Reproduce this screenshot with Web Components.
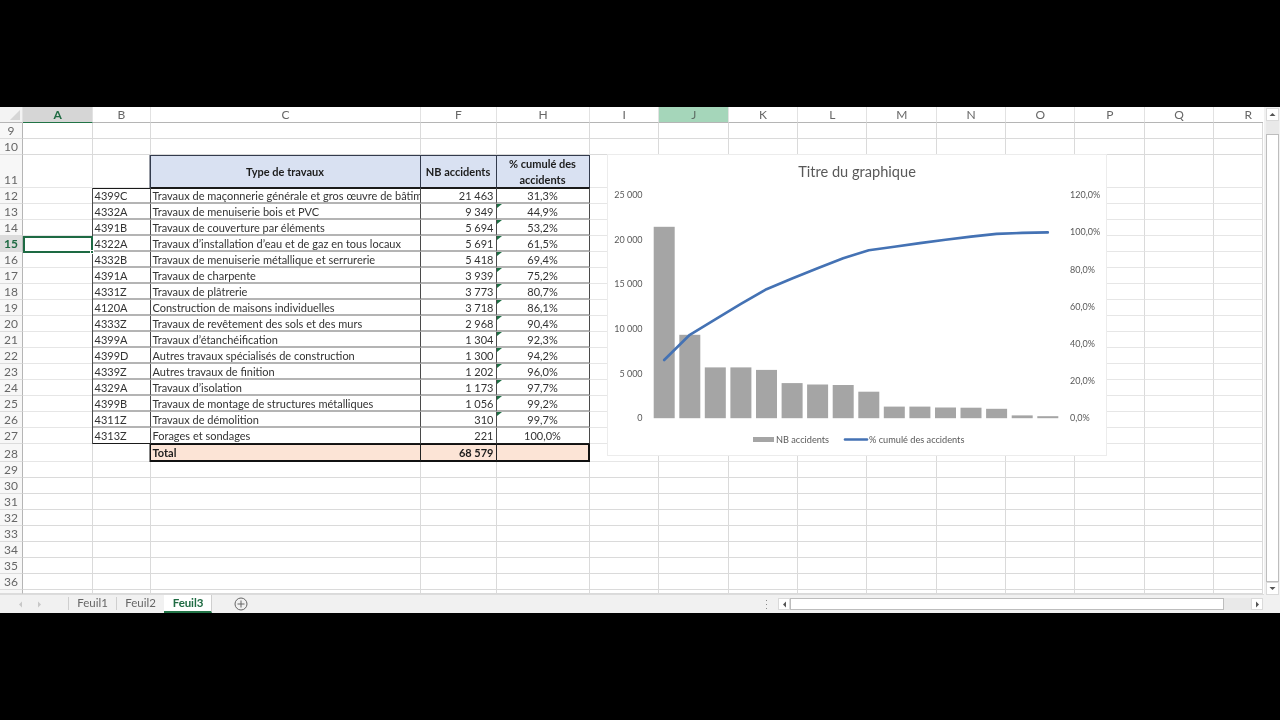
<!DOCTYPE html>
<html lang="fr">
<head>
<meta charset="utf-8">
<title>Feuil3</title>
<style>
  html, body { margin: 0; padding: 0; background: #000; }
  body { width: 1280px; height: 720px; overflow: hidden; display: flex; flex-direction: column; font-family: "Lato", "Liberation Sans", sans-serif; }
  .bar { height: 107px; flex: none; }
</style>
</head>
<body>
<div class="bar"></div>
<xl-workbook></xl-workbook>

<script>
const COLS = [['A', 69.5], ['B', 58], ['C', 270], ['F', 76], ['H', 93], ['I', 69.5], ['J', 69.5], ['K', 69], ['L', 69.5], ['M', 69.5], ['N', 69], ['O', 69.5], ['P', 69.5], ['Q', 69], ['R', 49.5]];
const ROWS = [[9, 16], [10, 16.5], [11, 33]];
for (let r = 12; r <= 27; r++) ROWS.push([r, 16]);
ROWS.push([28, 18]);
for (let r = 29; r <= 36; r++) ROWS.push([r, 16]);
ROWS.push(['', 4]);

const DATA = [
  ['4399C', 'Travaux de maçonnerie générale et gros œuvre de bâtiment', 21463, '31,3%'],
  ['4332A', 'Travaux de menuiserie bois et PVC', 9349, '44,9%'],
  ['4391B', 'Travaux de couverture par éléments', 5694, '53,2%'],
  ['4322A', 'Travaux d’installation d’eau et de gaz en tous locaux', 5691, '61,5%'],
  ['4332B', 'Travaux de menuiserie métallique et serrurerie', 5418, '69,4%'],
  ['4391A', 'Travaux de charpente', 3939, '75,2%'],
  ['4331Z', 'Travaux de plâtrerie', 3773, '80,7%'],
  ['4120A', 'Construction de maisons individuelles', 3718, '86,1%'],
  ['4333Z', 'Travaux de revêtement des sols et des murs', 2968, '90,4%'],
  ['4399A', 'Travaux d’étanchéification', 1304, '92,3%'],
  ['4399D', 'Autres travaux spécialisés de construction', 1300, '94,2%'],
  ['4339Z', 'Autres travaux de finition', 1202, '96,0%'],
  ['4329A', 'Travaux d’isolation', 1173, '97,7%'],
  ['4399B', 'Travaux de montage de structures métalliques', 1056, '99,2%'],
  ['4311Z', 'Travaux de démolition', 310, '99,7%'],
  ['4313Z', 'Forages et sondages', 221, '100,0%']
];

const fmt = n => String(n).replace(/\B(?=(\d{3})+$)/g, '\u00a0');

// en-tetes de colonnes + feuille
class XlSheet extends HTMLElement {
  constructor() {
    super();
    this.attachShadow({ mode: 'open' });
  }

  connectedCallback() {
    const cols = COLS.map(c => c[1] + 'px').join(' ');
    const rows = ROWS.map(r => r[1] + 'px').join(' ');
    let cells = '';
    ROWS.forEach(([r]) => {
      cells += `<div class="rh ${r === 15 ? 'sel' : ''}"><span>${r}</span></div>`;
      COLS.forEach(([c]) => {
        cells += this.cell(c, r);
      });
    });
    this.shadowRoot.innerHTML = `
      <style>
        :host { display: block; width: 1264px; height: 487px; position: relative; overflow: hidden; background: #fff; color: #333; font-size: 11px; }
        .heads { display: grid; grid-template-columns: 23px ${cols}; height: 15.5px; }
        .ch { border-bottom: 1px solid #b5b5b5; border-right: 1px solid #e2e2e2; box-sizing: border-box; text-align: center; color: #666; font-size: 12px; line-height: 15px; padding-left: 1px; }
        .ch.corner { position: relative; background: #f3f3f3; }
        .ch.corner::after { content: ''; position: absolute; right: 2px; bottom: 2px; border-left: 10px solid transparent; border-bottom: 10px solid #d6d6d6; }
        .ch.sel { background: #d6d6d6; color: #1f6b43; font-weight: 700; border-bottom: 1px solid #217346; }
        .ch.hot { background: #a5d6ba; color: #5f6f66; }
        .ch.cut { padding-left: 20px; border-right: 0; }
        .grid { display: grid; grid-template-columns: 23px ${cols}; grid-template-rows: ${rows}; }
        .rh { background: #f7f7f7; border-right: 1px solid #b5b5b5; border-bottom: 1px solid #dcdcdc; box-sizing: border-box; color: #666; font-size: 12px; display: flex; align-items: flex-end; justify-content: center; line-height: 15px; overflow: hidden; }
        .rh.sel { background: #dcdcdc; color: #1f6b43; font-weight: 700; }
        .c { box-sizing: border-box; border-right: 1px solid #dadada; border-bottom: 1px solid #dadada; padding: 0 2px; white-space: nowrap; overflow: hidden; line-height: 15px; position: relative; }
        .c.soft { border-bottom: 1.5px solid #e6e6e6; }
        .t { border-right: 1px solid #4a4a4a; border-bottom: 2px solid #b4b4b4; }
        .first { box-shadow: inset 0 1px 0 #1a1a1a; }
        .t.last { border-bottom: 1.5px solid #1a1a1a; }
        .bl { box-shadow: -1px 0 0 #4a4a4a; }
        .bl.first { box-shadow: -1px 0 0 #4a4a4a, inset 0 1px 0 #1a1a1a; }
        .r { text-align: right; }
        .m { text-align: center; }
        .hd { background: #d9e1f2; border-top: 1.5px solid #333b4d; border-bottom: 1.5px solid #1a1a1a; border-right: 1.5px solid #333b4d; font-weight: 700; color: #1c1c1c; display: flex; align-items: center; justify-content: center; text-align: center; white-space: normal; line-height: 16px; }
        .hd.left { box-shadow: -1.5px 0 0 #333b4d; }
        .tot { background: #fce4d6; border-top: 1px solid #111; border-bottom: 2px solid #111; border-right: 1.5px solid #222; font-weight: 700; color: #1c1c1c; line-height: 16px; }
        .tot.left { box-shadow: -1.5px 0 0 #111; }
        .tot.end { border-right: 2px solid #111; }
        .tri::before { content: ''; position: absolute; left: 0; top: 0; border-top: 4px solid #1e7145; border-right: 5px solid transparent; }
        .cur { position: absolute; left: 22.5px; top: 129px; width: 70px; height: 17px; box-sizing: border-box; border: 2px solid #1d6a43; }
        .cur::after { content: ''; position: absolute; right: -3px; bottom: -3px; width: 4px; height: 4px; background: #1d6a43; border: 1px solid #fff; box-sizing: border-box; }
        xl-chart { position: absolute; left: 607px; top: 47px; }
      </style>
      <div class="heads">
        <div class="ch corner"></div>
        ${COLS.map(([c]) => `<div class="ch ${c === 'A' ? 'sel' : ''} ${c === 'J' ? 'hot' : ''} ${c === 'R' ? 'cut' : ''}">${c}</div>`).join('')}
      </div>
      <div class="grid">${cells}</div>
      <div class="cur"></div>
      <xl-chart></xl-chart>
    `;
  }

  cell(c, r) {
    if (r === 11) {
      if (c === 'C') return '<div class="c hd left">Type de travaux</div>';
      if (c === 'F') return '<div class="c hd">NB accidents</div>';
      if (c === 'H') return '<div class="c hd">% cumulé des accidents</div>';
    }
    if (r === 28) {
      if (c === 'C') return '<div class="c tot left">Total</div>';
      if (c === 'F') return `<div class="c tot r">${fmt(68579)}</div>`;
      if (c === 'H') return '<div class="c tot end"></div>';
    }
    if (r >= 12 && r <= 27) {
      const d = DATA[r - 12];
      const e = `${r === 12 ? 'first' : ''} ${r === 27 ? 'last' : ''}`;
      if (c === 'B') return `<div class="c t bl ${e}">${d[0]}</div>`;
      if (c === 'C') return `<div class="c t ${e}">${d[1]}</div>`;
      if (c === 'F') return `<div class="c t r ${e}">${fmt(d[2])}</div>`;
      if (c === 'H') return `<div class="c t m ${r > 12 && r < 27 ? 'tri' : ''} ${e}">${d[3]}</div>`;
    }
    return `<div class="c ${r >= 11 && r <= 28 ? 'soft' : ''}"></div>`;
  }
}

// graphique : barres + courbe cumulee
class XlChart extends HTMLElement {
  constructor() {
    super();
    this.attachShadow({ mode: 'open' });
  }

  connectedCallback() {
    const x0 = 56.2, step = 25.57, base = 263.2, h = 223;
    const vals = DATA.map(d => d[2]);
    const pct = DATA.map(d => parseFloat(d[3].replace(',', '.')));
    const bars = vals.map((v, i) => {
      const bh = v * h / 25000;
      return `<rect x="${(x0 + step * i - 10.5).toFixed(1)}" y="${(base - bh).toFixed(1)}" width="21" height="${bh.toFixed(1)}"/>`;
    }).join('');
    const pts = pct.map((p, i) => `${(x0 + step * i).toFixed(1)},${(base - p * h / 120).toFixed(1)}`).join(' ');
    const left = ['25 000', '20 000', '15 000', '10 000', '5 000', '0'].map((t, i) =>
      `<text x="34.6" y="${base - h + i * h / 5 + 3}" text-anchor="end">${t}</text>`).join('');
    const right = ['120,0%', '100,0%', '80,0%', '60,0%', '40,0%', '20,0%', '0,0%'].map((t, i) =>
      `<text x="462" y="${base - h + i * h / 6 + 3}">${t}</text>`).join('');
    this.shadowRoot.innerHTML = `
      <style>
        :host { display: block; width: 500px; height: 302px; background: #fff; border: 1px solid #ececec; box-sizing: border-box; }
        svg { display: block; font-family: "Lato", "Liberation Sans", sans-serif; font-size: 9px; fill: #595959; }
        .bars { fill: #a5a5a5; }
        .line { fill: none; stroke: #4472b4; stroke-width: 2.6; stroke-linejoin: round; stroke-linecap: round; }
        .title { font-size: 14.6px; fill: #595959; }
        .lg { font-size: 9.2px; }
      </style>
      <svg width="498" height="300" viewBox="0 0 498 300">
        <text class="title" x="249" y="22" text-anchor="middle">Titre du graphique</text>
        ${left}${right}
        <g class="bars">${bars}</g>
        <polyline class="line" points="${pts}"/>
        <rect class="bars" x="145" y="282" width="21" height="5"/>
        <text class="lg" x="168" y="288">NB accidents</text>
        <line class="line" x1="237" y1="284.5" x2="259" y2="284.5"/>
        <text class="lg" x="261" y="288">% cumulé des accidents</text>
      </svg>
    `;
  }
}

// barre des onglets et ascenseur horizontal
class XlTabs extends HTMLElement {
  constructor() {
    super();
    this.attachShadow({ mode: 'open' });
  }

  connectedCallback() {
    this.shadowRoot.innerHTML = `
      <style>
        :host { display: flex; align-items: stretch; height: 19px; background: #f1f1f1; border-top: 1px solid #dcdcdc; box-sizing: border-box; width: 1264px; color: #666; font-size: 11.5px; }
        .nav { width: 68px; display: flex; align-items: center; gap: 14px; padding-left: 18px; box-sizing: border-box; flex: none; }
        .tab { display: flex; align-items: center; justify-content: center; border-left: 1px solid #cfcfcf; box-sizing: border-box; width: 48px; margin: 2px 0 3px; flex: none; padding-bottom: 2px; }
        .tab.on { background: #fff; color: #1f6b43; font-weight: 700; border: 0; margin: 0; padding-left: 1px; border-bottom: 2px solid #217346; border-right: 1px solid #cfcfcf; width: 48px; letter-spacing: -.1px; }
        .add { margin-left: 22px; display: flex; align-items: center; flex: none; }
        .dots { margin-left: 517px; width: 14px; display: flex; align-items: center; flex: none; }
        .hs { width: 485px; flex: none; display: flex; align-items: center; margin-left: -1px; }
        .arrow { width: 12px; height: 12px; background: #fff; border: 1px solid #dadada; box-sizing: border-box; display: flex; align-items: center; justify-content: center; flex: none; }
        .thumb { width: 434px; height: 12px; background: #fff; border: 1px solid #bdbdbd; box-sizing: border-box; flex: none; }
        .track { width: 27px; height: 12px; background: #e9e9e9; flex: none; }
      </style>
      <div class="nav">
        <svg width="5" height="7" viewBox="0 0 5 7"><path d="M4 0.5 1 3.5 4 6.5Z" fill="#c8c8c8"/></svg>
        <svg width="5" height="7" viewBox="0 0 5 7"><path d="M1 0.5 4 3.5 1 6.5Z" fill="#c8c8c8"/></svg>
      </div>
      <div class="tab">Feuil1</div>
      <div class="tab">Feuil2</div>
      <div class="tab on">Feuil3</div>
      <div class="add">
        <svg width="14" height="14" viewBox="0 0 14 14" fill="none" stroke="#666"><circle cx="7" cy="7" r="6"/><path d="M7 3.5v7M3.5 7h7"/></svg>
      </div>
      <div class="dots">
        <svg width="3" height="9" viewBox="0 0 3 9" fill="#8a8a8a"><rect x="1" y="0" width="1" height="1"/><rect x="1" y="4" width="1" height="1"/><rect x="1" y="8" width="1" height="1"/></svg>
      </div>
      <div class="hs">
        <div class="arrow"><svg width="5" height="7" viewBox="0 0 5 7"><path d="M4 0.5 1 3.5 4 6.5Z" fill="#555"/></svg></div>
        <div class="thumb"></div>
        <div class="track"></div>
        <div class="arrow"><svg width="5" height="7" viewBox="0 0 5 7"><path d="M1 0.5 4 3.5 1 6.5Z" fill="#555"/></svg></div>
      </div>
    `;
  }
}

// ascenseur vertical
class XlVscroll extends HTMLElement {
  constructor() {
    super();
    this.attachShadow({ mode: 'open' });
  }

  connectedCallback() {
    this.shadowRoot.innerHTML = `
      <style>
        :host { display: flex; flex-direction: column; align-items: center; width: 16px; height: 506px; background: #f1f1f1; box-sizing: border-box; padding-top: 1px; }
        .arrow { width: 13px; height: 13px; background: #fff; border: 1px solid #dadada; box-sizing: border-box; display: flex; align-items: center; justify-content: center; flex: none; }
        .track { width: 13px; height: 13px; background: #e9e9e9; flex: none; }
        .thumb { width: 13px; height: 448px; background: #fff; border: 1px solid #bdbdbd; box-sizing: border-box; flex: none; }
      </style>
      <div class="arrow"><svg width="7" height="5" viewBox="0 0 7 5"><path d="M.5 4 3.5 1 6.5 4Z" fill="#555"/></svg></div>
      <div class="track"></div>
      <div class="thumb"></div>
      <div class="arrow"><svg width="7" height="5" viewBox="0 0 7 5"><path d="M.5 1 3.5 4 6.5 1Z" fill="#555"/></svg></div>
    `;
  }
}

class XlWorkbook extends HTMLElement {
  constructor() {
    super();
    this.attachShadow({ mode: 'open' });
  }

  connectedCallback() {
    this.shadowRoot.innerHTML = `
      <style>
        :host { display: flex; width: 1280px; height: 506px; background: #f1f1f1; flex: none; filter: blur(.35px); }
        .main { display: flex; flex-direction: column; width: 1264px; flex: none; }
      </style>
      <div class="main">
        <xl-sheet></xl-sheet>
        <xl-tabs></xl-tabs>
      </div>
      <xl-vscroll></xl-vscroll>
    `;
  }
}

customElements.define('xl-chart', XlChart);
customElements.define('xl-sheet', XlSheet);
customElements.define('xl-tabs', XlTabs);
customElements.define('xl-vscroll', XlVscroll);
customElements.define('xl-workbook', XlWorkbook);
</script>
</body>
</html>
